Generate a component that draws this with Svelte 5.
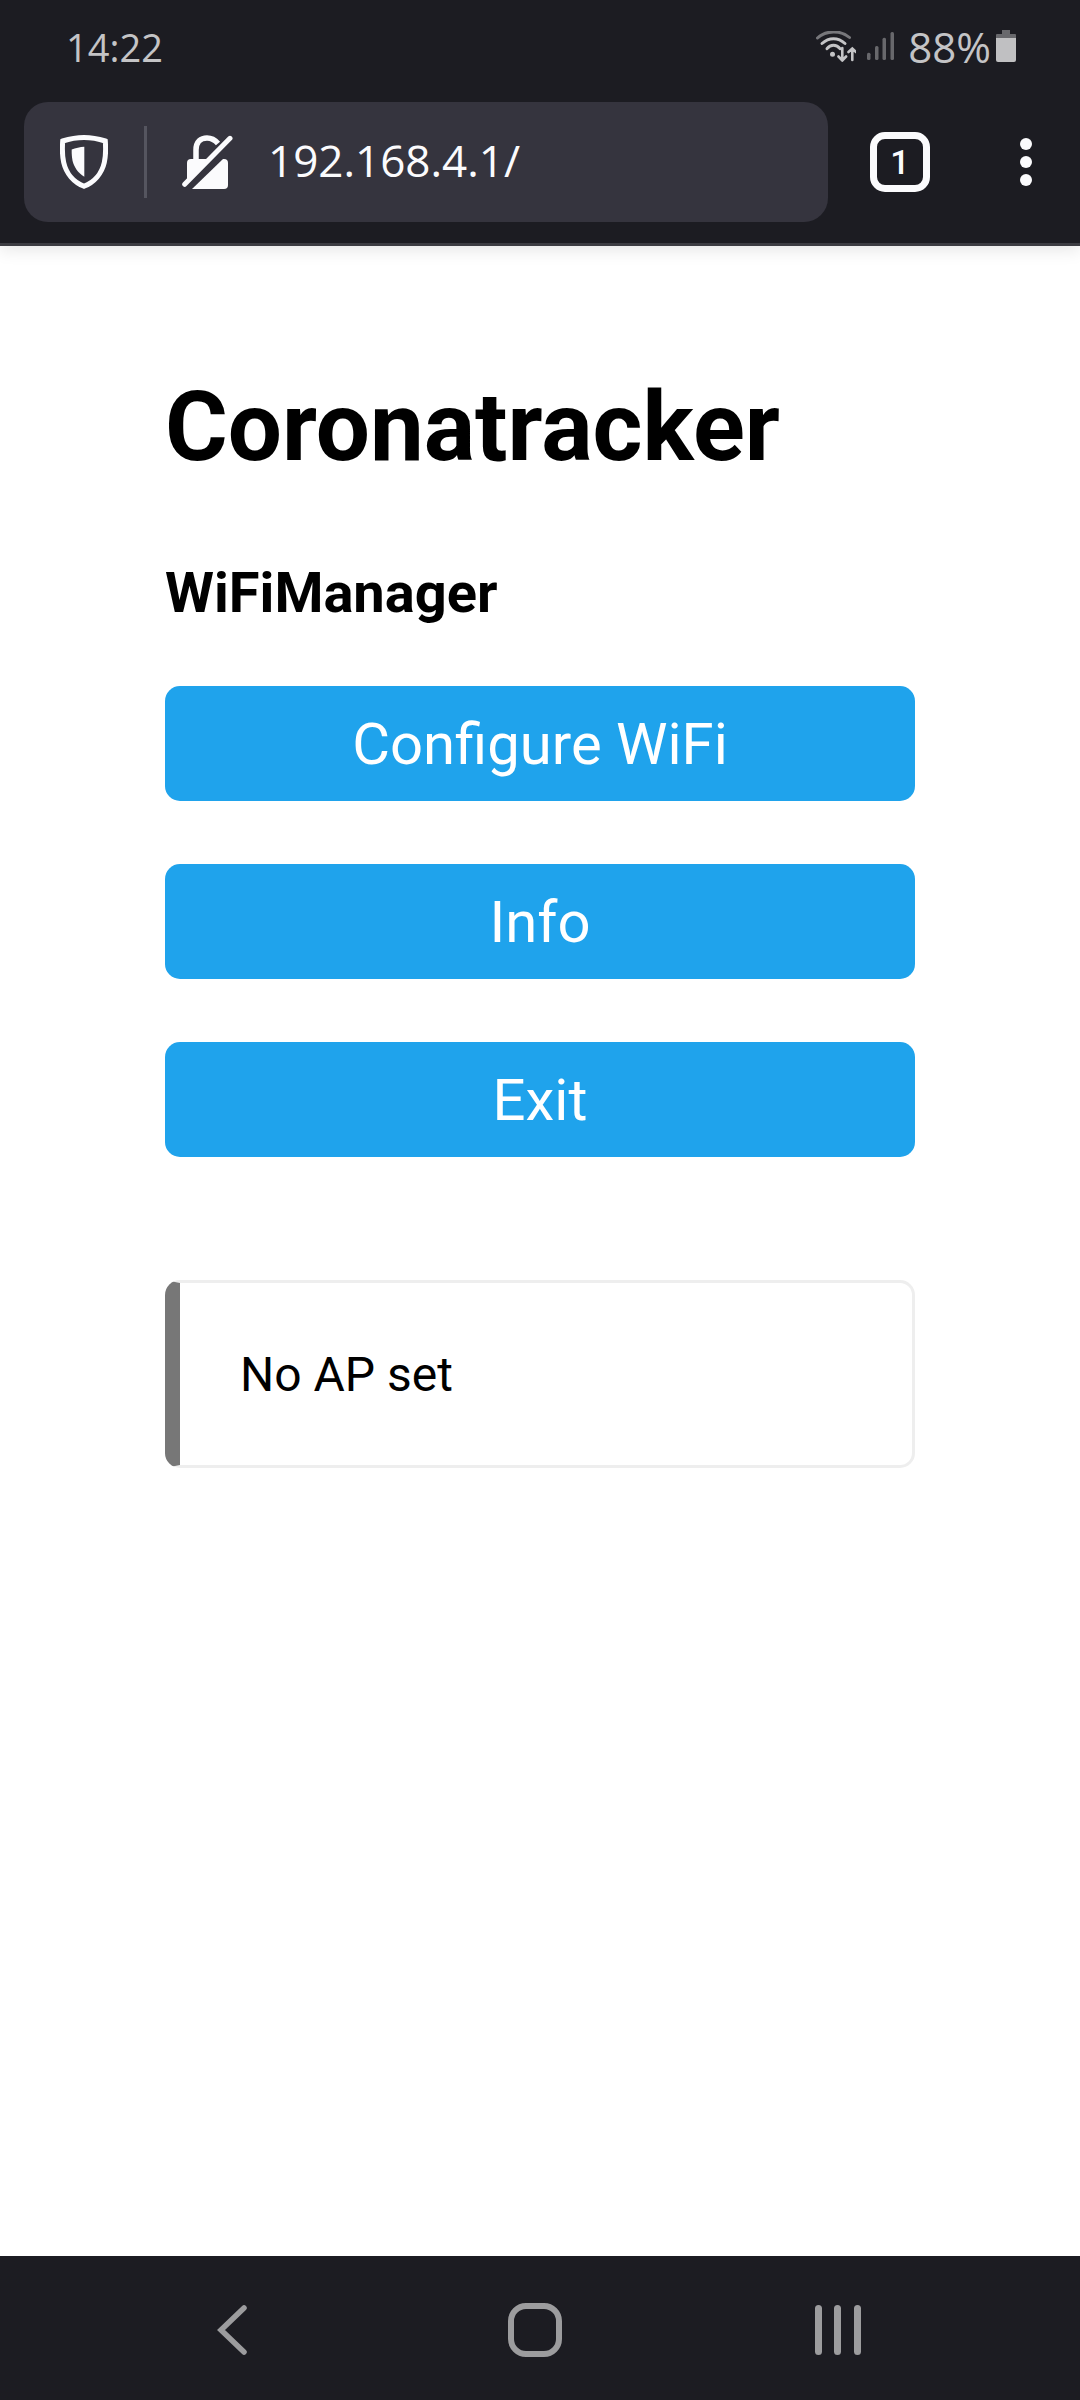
<script>
  const links = ['Configure WiFi', 'Info', 'Exit'];
</script>

<div class="screen">
  <header class="chrome">
    <div class="status">
      <span class="time">14:22</span>
      <div class="status-right">
        <svg class="wifi" width="40" height="31" viewBox="0 0 40 31" fill="none" stroke-linecap="round">
          <path d="M1.500 7C10 -1 25 -1 33.500 6.500" stroke="#77777b" stroke-width="3" />
          <path d="M6 12.500C13 6 22 6 29 12.500" stroke="#c4c4c6" stroke-width="3" />
          <path d="M11 17.700C14.500 13 20.500 13 24 17.700" stroke="#c4c4c6" stroke-width="3" />
          <circle cx="16.500" cy="23.300" r="2.5" fill="#c4c4c6" />
          <path d="M26.300 17V29.500M22.500 25.500L26.300 29.500L30.100 25.500M36.300 29V17.500M32.500 21L36.300 17.500L40 21" stroke="#c4c4c6" stroke-width="2.6" />
        </svg>
        <svg class="signal" width="27" height="28" viewBox="0 0 27 28" fill="#68686c">
          <rect x="0" y="20.700" width="3.500" height="7.300" rx="1.500" />
          <rect x="8" y="14" width="3.500" height="14" rx="1.500" />
          <rect x="15.500" y="5.700" width="3.500" height="22.300" rx="1.500" />
          <rect x="23.500" y="0" width="3.500" height="28" rx="1.500" />
        </svg>
        <span class="pct">88%</span>
        <svg class="battery" width="20" height="32" viewBox="0 0 20 32">
          <path d="M6 0H14V4H19A1 1 0 0 1 20 5V8H0V5A1 1 0 0 1 1 4H6Z" fill="#68686c" />
          <path d="M0 8H20V30A2 2 0 0 1 18 32H2A2 2 0 0 1 0 30Z" fill="#c0c0c2" />
        </svg>
      </div>
    </div>
    <div class="toolbar">
      <div class="urlbar">
        <svg class="shield" width="48" height="54" viewBox="0 0 48 54" fill="none">
          <path d="M24 2.500C30 2.500 38 3.700 45.300 6C45.800 13 45.800 21 44.300 27.500C41.800 38.500 34 47.300 24 51.300C14 47.300 6.200 38.500 3.700 27.500C2.200 21 2.200 13 2.700 6C10 3.700 18 2.500 24 2.500Z" stroke="#fbfbfd" stroke-width="5" />
          <path d="M24.300 11.700V41.700C18 38 14 32 12.500 25.500C11.800 22 11.600 18 11.700 14.500C15.500 13 20 12 24.300 11.700Z" fill="#fbfbfd" />
        </svg>
        <span class="divider"></span>
        <svg class="lock" width="51" height="54" viewBox="0 0 51 54" fill="none">
          <path d="M14 26V15C14 6.500 19 3 25 3C30 3 33 5 36 8.500" stroke="#fbfbfd" stroke-width="5.500" />
          <path d="M5 28A4 4 0 0 1 9 24H27L5 46Z" fill="#fbfbfd" />
          <path d="M10 54L41 24H42A4 4 0 0 1 46 28V50A4 4 0 0 1 42 54Z" fill="#fbfbfd" />
          <path d="M2.700 49.300L48 3.300" stroke="#fbfbfd" stroke-width="5" stroke-linecap="round" />
        </svg>
        <span class="url">192.168.4.1/</span>
      </div>
      <div class="tabs"><span>1</span></div>
      <div class="menu"><i></i><i></i><i></i></div>
    </div>
  </header>

  <main class="wrap">
    <h1>Coronatracker</h1>
    <h3>WiFiManager</h3>
    <nav class="buttons">
      {#each links as link}
        <button>{link}</button>
      {/each}
    </nav>
    <div class="msg">No AP set</div>
  </main>

  <footer class="navbar">
    <svg class="back" width="30" height="50" viewBox="0 0 30 50" fill="none" stroke="#9c9c9e" stroke-width="5.500" stroke-linecap="round" stroke-linejoin="miter">
      <path d="M27 3L4 25L27 47" />
    </svg>
    <svg class="home" width="54" height="54" viewBox="0 0 54 54" fill="none" stroke="#9c9c9e" stroke-width="6">
      <rect x="3" y="3" width="48" height="48" rx="15" />
    </svg>
    <svg class="recents" width="46" height="50" viewBox="0 0 46 50" fill="none" stroke="#9c9c9e" stroke-width="7" stroke-linecap="round">
      <path d="M3.500 3.500V46.500M22.500 3.500V46.500M42.500 3.500V46.500" />
    </svg>
  </footer>
</div>

<style>
  :global(body) {
    margin: 0;
    background: #fff;
  }

  .screen {
    width: 1080px;
    height: 2400px;
    display: flex;
    flex-direction: column;
    font-family: Roboto, sans-serif;
    color: #000;
  }

  .chrome {
    height: 243px;
    flex-shrink: 0;
    background: #1c1c22;
    border-bottom: 3px solid #3c3c42;
    box-shadow: 0 4px 16px rgba(0, 0, 0, 0.1);
    display: flex;
    flex-direction: column;
  }

  .status {
    height: 102px;
    padding: 0 64px 0 66px;
    display: flex;
    align-items: center;
    justify-content: space-between;
    box-sizing: border-box;
    color: #c4c4c6;
    font-family: "Open Sans", sans-serif;
    font-size: 38px;
  }

  .time {
    position: relative;
    top: -4px;
  }

  .status-right {
    display: flex;
    align-items: center;
    position: relative;
    top: -5px;
  }

  .signal {
    margin-left: 11px;
  }

  .pct {
    margin-left: 14px;
    margin-right: 5px;
    font-size: 42px;
  }

  .toolbar {
    height: 120px;
    padding-left: 24px;
    display: flex;
    align-items: center;
  }

  .urlbar {
    width: 804px;
    height: 120px;
    background: #35343e;
    border-radius: 24px;
    display: flex;
    align-items: center;
    padding-left: 36px;
    box-sizing: border-box;
  }

  .divider {
    width: 3px;
    height: 72px;
    background: #55555f;
    margin: 0 35px 0 36px;
  }

  .url {
    margin-left: 35px;
    color: #fbfbfd;
    font-family: "Open Sans", sans-serif;
    font-size: 44px;
    position: relative;
    top: -2px;
  }

  .tabs {
    margin-left: 42px;
    width: 60px;
    height: 60px;
    border: 7px solid #fbfbfd;
    border-radius: 15px;
    box-sizing: border-box;
    display: flex;
    align-items: center;
    justify-content: center;
    color: #fbfbfd;
    font-size: 34px;
    font-weight: 500;
  }

  .menu {
    margin-left: 90px;
    display: flex;
    flex-direction: column;
    gap: 6px;
  }

  .menu i {
    display: block;
    width: 12px;
    height: 12px;
    border-radius: 50%;
    background: #fbfbfd;
  }

  .wrap {
    flex: 1;
    padding: 0 165px;
  }

  h1 {
    margin: 125px 0 0;
    font-size: 96px;
    line-height: 112px;
    font-weight: 700;
  }

  h3 {
    margin: 78px 0 0;
    font-size: 56px;
    line-height: 64px;
    font-weight: 700;
  }

  .buttons {
    margin-top: 61px;
    display: flex;
    flex-direction: column;
    gap: 63px;
  }

  button {
    height: 115px;
    border: 0;
    border-radius: 15px;
    background: #1fa3ec;
    color: #fff;
    font-family: inherit;
    font-size: 58px;
    padding: 0;
  }

  .msg {
    margin-top: 123px;
    height: 188px;
    box-sizing: border-box;
    border: 3px solid #eee;
    border-left: 15px solid #777;
    border-radius: 15px;
    display: flex;
    align-items: center;
    padding-left: 60px;
    font-size: 48px;
  }

  .navbar {
    height: 144px;
    flex-shrink: 0;
    background: #1c1c22;
    display: flex;
    align-items: center;
    padding: 3px 0 0 217px;
    box-sizing: border-box;
  }

  .home {
    margin-left: 261px;
  }

  .recents {
    margin-left: 253px;
  }
</style>
